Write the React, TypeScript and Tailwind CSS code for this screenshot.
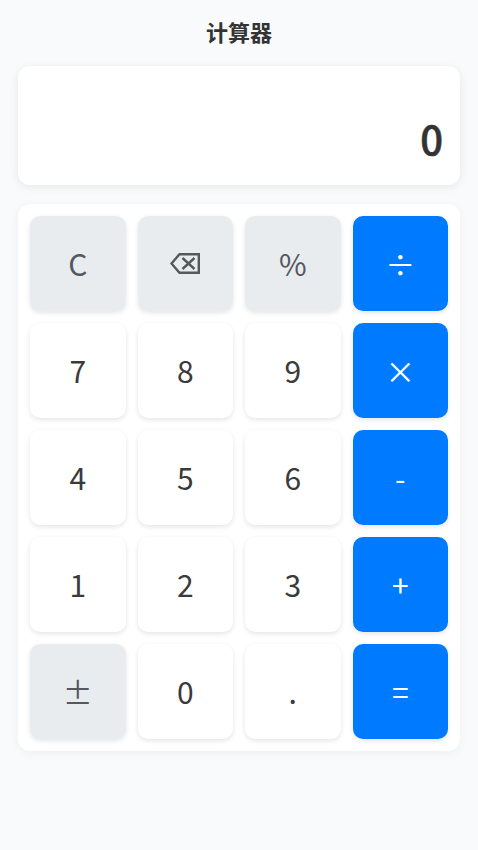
const keys = [
  { label: 'C', kind: 'fn' },
  { label: 'backspace', kind: 'fn' },
  { label: '%', kind: 'fn' },
  { label: '÷', kind: 'op' },
  { label: '7', kind: 'num' },
  { label: '8', kind: 'num' },
  { label: '9', kind: 'num' },
  { label: '×', kind: 'op' },
  { label: '4', kind: 'num' },
  { label: '5', kind: 'num' },
  { label: '6', kind: 'num' },
  { label: '-', kind: 'op' },
  { label: '1', kind: 'num' },
  { label: '2', kind: 'num' },
  { label: '3', kind: 'num' },
  { label: '+', kind: 'op' },
  { label: '±', kind: 'fn' },
  { label: '0', kind: 'num' },
  { label: '.', kind: 'num' },
  { label: '=', kind: 'op' },
];

const keyStyles: Record<string, string> = {
  num: 'bg-white text-[#3a3a3a]',
  fn: 'bg-[#e9ecef] text-[#54595e]',
  op: 'bg-[#007bff] text-white',
};

function BackspaceIcon() {
  return (
    <svg width="30" height="21" viewBox="0 0 30 21" fill="none" stroke="currentColor" strokeWidth="2.4">
      <path d="M1.5 10.5 L9.5 1.2 H28.8 V19.8 H9.5 Z" />
      <path d="M12.5 5 L24.5 16 M24.5 5 L12.5 16" />
    </svg>
  );
}

export default function App() {
  return (
    <div className="min-h-[850px] bg-[#f9fafc] px-[18px] font-['Noto_Sans_CJK_SC','Noto_Sans',sans-serif]">
      <h1 className="pt-[16px] pb-[20px] text-center text-[22px] leading-[30px] font-semibold text-[#333333]">计算器</h1>

      {/* Display */}
      <div className="flex h-[119px] items-end justify-end rounded-xl bg-white py-[18px] pr-[17px] pl-[18px] shadow-[0_2px_10px_rgba(0,0,0,0.08)]">
        <span className="text-[40px] leading-[58px] font-medium text-[#333333] [-webkit-text-stroke:0.6px_#333333]">0</span>
      </div>

      {/* Keypad */}
      <div className="mt-[19px] grid grid-cols-4 gap-3 rounded-xl bg-white p-3 shadow-[0_2px_10px_rgba(0,0,0,0.05)]">
        {keys.map(key => (
          <button
            key={key.label}
            className={`flex h-[95px] items-center justify-center rounded-[10px] text-[30px] font-normal shadow-[0_2px_5px_rgba(0,0,0,0.1)] ${keyStyles[key.kind]}`}
          >
            {key.label === 'backspace' ? <BackspaceIcon /> : key.label}
          </button>
        ))}
      </div>
    </div>
  );
}
